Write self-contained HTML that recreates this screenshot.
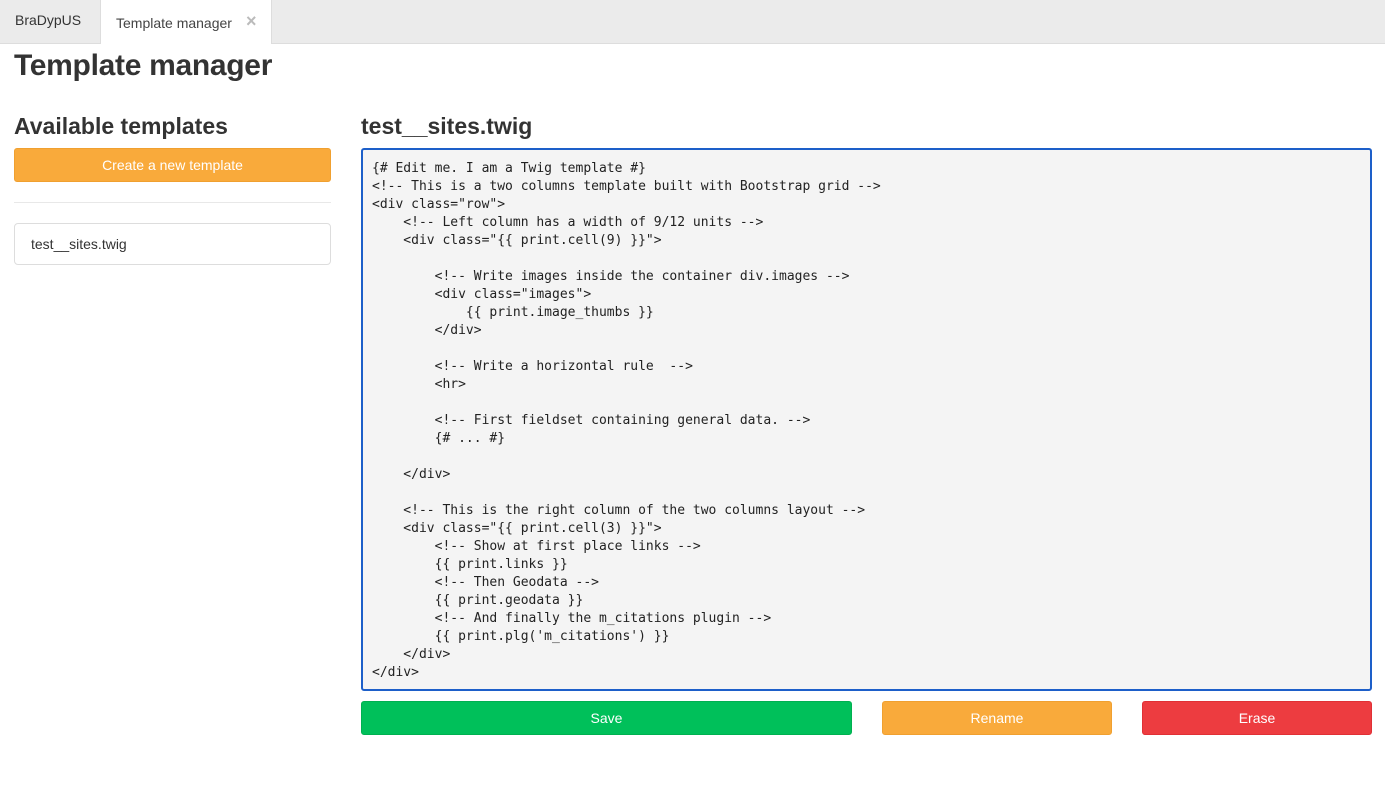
<!DOCTYPE html>
<html><head><meta charset="utf-8"><style>
body{margin:0;width:1385px;height:792px;background:#fff;font-family:"Liberation Sans",Arial,sans-serif;color:#333;overflow:hidden;position:relative}
.tabs{position:absolute;left:0;top:0;width:1385px;height:43px;background:#ebebeb;border-bottom:1px solid #ddd}
.t1{position:absolute;left:15px;top:12px;font-size:14px;color:#333}
.t2{position:absolute;left:100px;top:0;width:172px;height:44px;background:#fff;border:1px solid #ddd;border-bottom:none;border-top:none;box-sizing:border-box}
.t2 span{position:absolute;left:15px;top:15px;font-size:14px;color:#444}
.t2 b{position:absolute;left:145px;top:11px;font-size:18px;color:#bbb;font-weight:bold}
h1{position:absolute;left:14px;top:49px;margin:0;font-size:30px;font-weight:bold;color:#333;letter-spacing:-0.3px}
h3{position:absolute;margin:0;font-size:23px;font-weight:bold;color:#333}
.btn{position:absolute;height:34px;border-radius:3px;color:#fff;font-size:14px;text-align:center;line-height:32px;box-sizing:border-box}
.hr{position:absolute;left:14px;top:202px;width:317px;height:1px;background:#e8e8e8}
.item{position:absolute;left:14px;top:223px;width:317px;height:42px;border:1px solid #ddd;border-radius:4px;box-sizing:border-box;font-size:14px;line-height:40px;padding-left:16px}
.ta{position:absolute;left:361px;top:148px;width:1011px;height:543px;border:2px solid #1d5fc9;border-radius:3px;background:#f4f4f4;box-sizing:border-box;margin:0;padding:10px 9px;font-family:"DejaVu Sans Mono",monospace;font-size:13px;line-height:18px;color:#222;white-space:pre}
</style></head><body>
<div class="tabs"><div class="t1">BraDypUS</div><div class="t2"><span>Template manager</span><b>×</b></div></div>
<h1>Template manager</h1>
<h3 style="left:14px;top:113px">Available templates</h3>
<h3 style="left:361px;top:113px">test__sites.twig</h3>
<div class="btn" style="left:14px;top:148px;width:317px;background:#f9aa3b;border:1px solid #f0a030">Create a new template</div>
<div class="hr"></div>
<div class="item">test__sites.twig</div>
<pre class="ta">{# Edit me. I am a Twig template #}
&lt;!-- This is a two columns template built with Bootstrap grid --&gt;
&lt;div class="row"&gt;
    &lt;!-- Left column has a width of 9/12 units --&gt;
    &lt;div class="{{ print.cell(9) }}"&gt;

        &lt;!-- Write images inside the container div.images --&gt;
        &lt;div class="images"&gt;
            {{ print.image_thumbs }}
        &lt;/div&gt;

        &lt;!-- Write a horizontal rule  --&gt;
        &lt;hr&gt;

        &lt;!-- First fieldset containing general data. --&gt;
        {# ... #}

    &lt;/div&gt;

    &lt;!-- This is the right column of the two columns layout --&gt;
    &lt;div class="{{ print.cell(3) }}"&gt;
        &lt;!-- Show at first place links --&gt;
        {{ print.links }}
        &lt;!-- Then Geodata --&gt;
        {{ print.geodata }}
        &lt;!-- And finally the m_citations plugin --&gt;
        {{ print.plg('m_citations') }}
    &lt;/div&gt;
&lt;/div&gt;</pre>
<div class="btn" style="left:361px;top:701px;width:491px;background:#00c05a;border:1px solid #00b050">Save</div>
<div class="btn" style="left:882px;top:701px;width:230px;background:#f9aa3b;border:1px solid #f0a030">Rename</div>
<div class="btn" style="left:1142px;top:701px;width:230px;background:#ed3c40;border:1px solid #e03035">Erase</div>
</body></html>
